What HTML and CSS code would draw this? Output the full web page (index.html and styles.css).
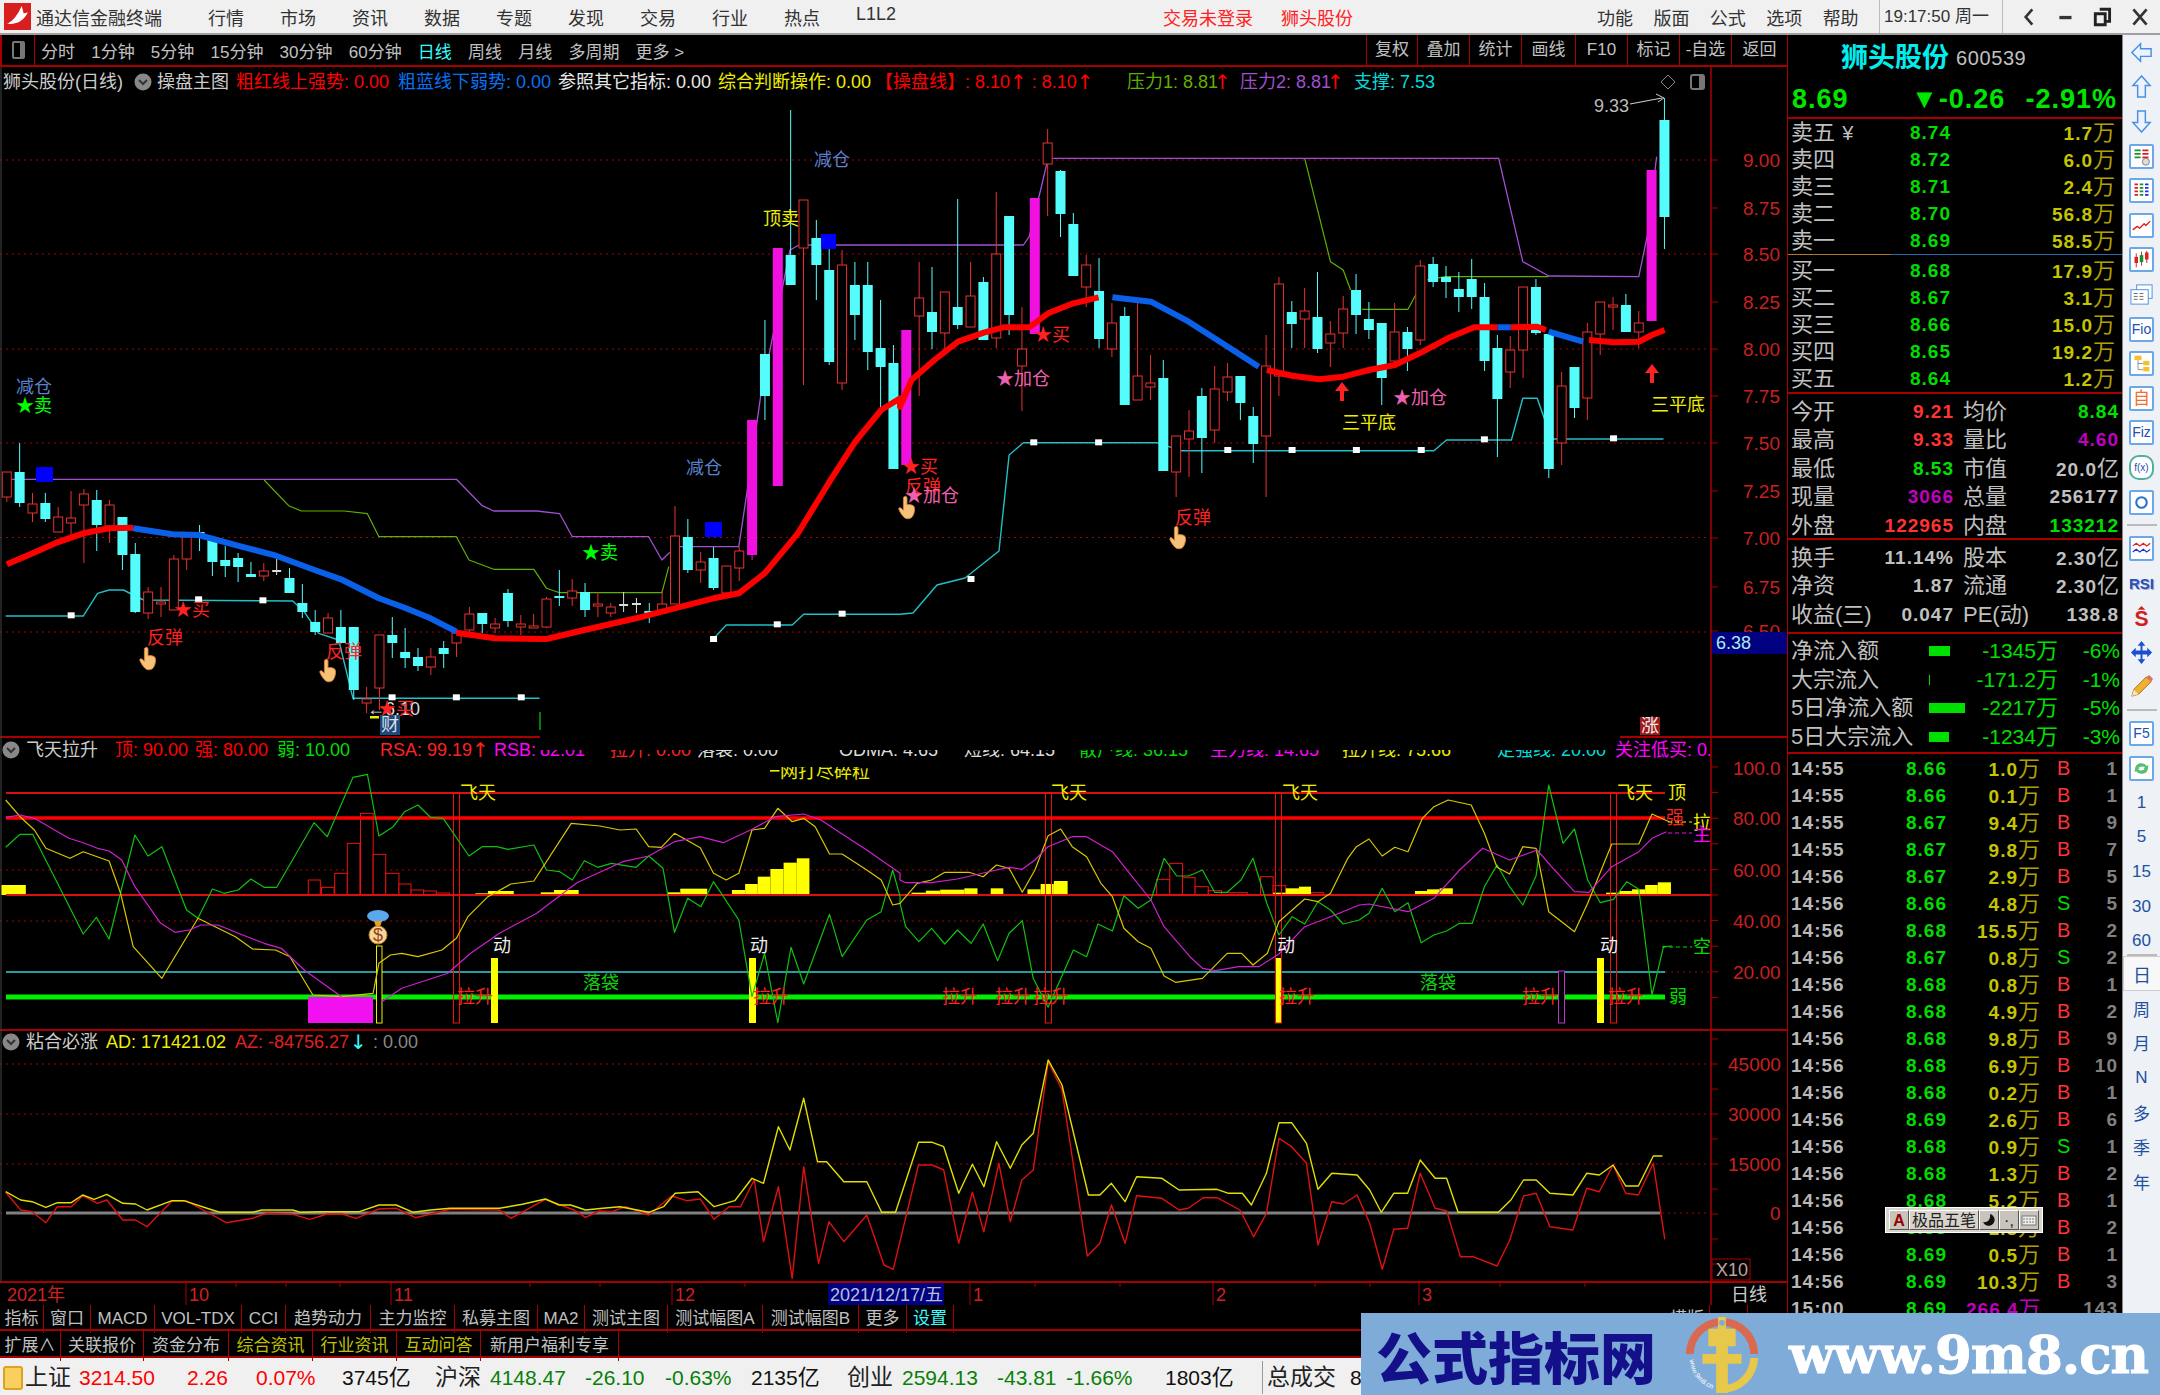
FILE: index.html
```html
<!DOCTYPE html>
<html lang="zh-CN">
<head>
  <meta charset="UTF-8">
  <title>通达信金融终端</title>
  <link rel="stylesheet" href="styles.css">
</head>
<body>
  <header class="topbar">
    <svg class="logo" viewBox="0 0 26 26"><rect width="26" height="26" fill="#d81e1e"/><path d="M3 20C9 17 13 12 17 3l2 7 4-1c-4 8-10 12-20 11z" fill="#fff"/></svg>
    <span class="app-name">通达信金融终端</span>
    <nav class="menu">
      <span>行情</span><span>市场</span><span>资讯</span><span>数据</span><span>专题</span>
      <span>发现</span><span>交易</span><span>行业</span><span>热点</span><span>L1L2</span>
    </nav>
    <span class="alert login">交易未登录</span>
    <span class="alert stock">狮头股份</span>
    <nav class="menu-right">
      <span>功能</span><span>版面</span><span>公式</span><span>选项</span><span>帮助</span>
    </nav>
    <span class="clock">19:17:50 周一</span>
    <div class="win-btns">
      <svg viewBox="0 0 20 20"><path d="M13 3 7 10l6 7" fill="none" stroke="#333" stroke-width="2.4"/></svg>
      <svg viewBox="0 0 20 20"><rect x="4" y="9" width="11" height="3" fill="#333"/></svg>
      <svg viewBox="0 0 20 20"><path d="M7 3h9v11h-3M3 7h9v10H3z" fill="none" stroke="#222" stroke-width="2.6"/></svg>
      <svg viewBox="0 0 20 20"><path d="M4 3l12 14M16 3 4 17" stroke="#333" stroke-width="2.4"/></svg>
    </div>
  </header>

  <div class="workspace">
    <section class="left-col">
      <div class="toolbar">
        <div class="tool-box"><span></span></div>
        <div class="periods">
          <span>分时</span><span>1分钟</span><span>5分钟</span><span>15分钟</span><span>30分钟</span><span>60分钟</span>
          <span class="on">日线</span><span>周线</span><span>月线</span><span>多周期</span><span>更多 &gt;</span>
        </div>
        <div class="tool-cells">
          <span>复权</span><span>叠加</span><span>统计</span><span>画线</span><span>F10</span><span>标记</span><span>-自选</span><span>返回</span>
        </div>
      </div>

      <svg id="chart" class="chart" viewBox="0 67 1787 1238" width="1787" height="1238"></svg>

      <div class="tabs tabs-one">
        <span>指标</span><span>窗口</span><span>MACD</span><span>VOL-TDX</span><span>CCI</span><span>趋势动力</span><span>主力监控</span>
        <span>私募主图</span><span>MA2</span><span>测试主图</span><span>测试幅图A</span><span>测试幅图B</span><span>更多</span><span class="on">设置</span>
        <span class="blank"></span><span>模版</span><span></span><span class="blank"></span>
      </div>
      <div class="tabs tabs-two">
        <span>扩展∧</span><span>关联报价</span><span>资金分布</span><span class="olive">综合资讯</span><span class="olive">行业资讯</span><span class="olive">互动问答</span><span>新用户福利专享</span>
      </div>
    </section>

    <aside class="quote-panel">
      <div class="stock-head"><span class="stock-name">狮头股份</span><span class="stock-code">600539</span></div>
      <div class="last-price"><span>8.69</span><span>▼-0.26</span><span>-2.91%</span></div>

      <div class="block asks">
        <div class="order"><span class="lb">卖五 <small>¥</small></span><b>8.74</b><em>1.7<i>万</i></em></div>
        <div class="order"><span class="lb">卖四</span><b>8.72</b><em>6.0<i>万</i></em></div>
        <div class="order"><span class="lb">卖三</span><b>8.71</b><em>2.4<i>万</i></em></div>
        <div class="order"><span class="lb">卖二</span><b>8.70</b><em>56.8<i>万</i></em></div>
        <div class="order"><span class="lb">卖一</span><b>8.69</b><em>58.5<i>万</i></em></div>
      </div>
      <div class="split"></div>
      <div class="block bids">
        <div class="order"><span class="lb">买一</span><b>8.68</b><em>17.9<i>万</i></em></div>
        <div class="order"><span class="lb">买二</span><b>8.67</b><em>3.1<i>万</i></em></div>
        <div class="order"><span class="lb">买三</span><b>8.66</b><em>15.0<i>万</i></em></div>
        <div class="order"><span class="lb">买四</span><b>8.65</b><em>19.2<i>万</i></em></div>
        <div class="order"><span class="lb">买五</span><b>8.64</b><em>1.2<i>万</i></em></div>
      </div>

      <div class="block stats first-stats">
        <div class="stat"><span class="lb">今开</span><b class="red">9.21</b><span class="lb">均价</span><b class="green">8.84</b></div>
        <div class="stat"><span class="lb">最高</span><b class="red">9.33</b><span class="lb">量比</span><b class="purple">4.60</b></div>
        <div class="stat"><span class="lb">最低</span><b class="green">8.53</b><span class="lb">市值</span><b>20.0<i>亿</i></b></div>
        <div class="stat"><span class="lb">现量</span><b class="purple">3066</b><span class="lb">总量</span><b>256177</b></div>
        <div class="stat"><span class="lb">外盘</span><b class="red">122965</b><span class="lb">内盘</span><b class="green">133212</b></div>
      </div>
      <div class="block stats second-stats">
        <div class="stat"><span class="lb">换手</span><b>11.14%</b><span class="lb">股本</span><b>2.30<i>亿</i></b></div>
        <div class="stat"><span class="lb">净资</span><b>1.87</b><span class="lb">流通</span><b>2.30<i>亿</i></b></div>
        <div class="stat"><span class="lb">收益(三)</span><b>0.047</b><span class="lb">PE(动)</span><b>138.8</b></div>
      </div>

      <div class="block flows">
        <div class="flow"><span class="lb">净流入额</span><span class="bar bar-a"></span><b>-1345<i>万</i></b><b>-6%</b></div>
        <div class="flow"><span class="lb">大宗流入</span><span class="bar bar-b"></span><b>-171.2<i>万</i></b><b>-1%</b></div>
        <div class="flow"><span class="lb">5日净流入额</span><span class="bar bar-c"></span><b>-2217<i>万</i></b><b>-5%</b></div>
        <div class="flow"><span class="lb">5日大宗流入</span><span class="bar bar-d"></span><b>-1234<i>万</i></b><b>-3%</b></div>
      </div>

      <div class="ticks">
        <div class="tick"><span>14:55</span><b>8.66</b><em>1.0<i>万</i></em><u>B</u><s>1</s></div>
        <div class="tick"><span>14:55</span><b>8.66</b><em>0.1<i>万</i></em><u>B</u><s>1</s></div>
        <div class="tick"><span>14:55</span><b>8.67</b><em>9.4<i>万</i></em><u>B</u><s>9</s></div>
        <div class="tick"><span>14:55</span><b>8.67</b><em>9.8<i>万</i></em><u>B</u><s>7</s></div>
        <div class="tick"><span>14:56</span><b>8.67</b><em>2.9<i>万</i></em><u>B</u><s>5</s></div>
        <div class="tick"><span>14:56</span><b>8.66</b><em>4.8<i>万</i></em><u class="sell">S</u><s>5</s></div>
        <div class="tick"><span>14:56</span><b>8.68</b><em>15.5<i>万</i></em><u>B</u><s>2</s></div>
        <div class="tick"><span>14:56</span><b>8.67</b><em>0.8<i>万</i></em><u class="sell">S</u><s>2</s></div>
        <div class="tick"><span>14:56</span><b>8.68</b><em>0.8<i>万</i></em><u>B</u><s>1</s></div>
        <div class="tick"><span>14:56</span><b>8.68</b><em>4.9<i>万</i></em><u>B</u><s>2</s></div>
        <div class="tick"><span>14:56</span><b>8.68</b><em>9.8<i>万</i></em><u>B</u><s>9</s></div>
        <div class="tick"><span>14:56</span><b>8.68</b><em>6.9<i>万</i></em><u>B</u><s>10</s></div>
        <div class="tick"><span>14:56</span><b>8.68</b><em>0.2<i>万</i></em><u>B</u><s>1</s></div>
        <div class="tick"><span>14:56</span><b>8.69</b><em>2.6<i>万</i></em><u>B</u><s>6</s></div>
        <div class="tick"><span>14:56</span><b>8.68</b><em>0.9<i>万</i></em><u class="sell">S</u><s>1</s></div>
        <div class="tick"><span>14:56</span><b>8.68</b><em>1.3<i>万</i></em><u>B</u><s>2</s></div>
        <div class="tick"><span>14:56</span><b>8.68</b><em>5.2<i>万</i></em><u>B</u><s>1</s></div>
        <div class="tick"><span>14:56</span><b>8.68</b><em>1.8<i>万</i></em><u>B</u><s>2</s></div>
        <div class="tick"><span>14:56</span><b>8.69</b><em>0.5<i>万</i></em><u>B</u><s>1</s></div>
        <div class="tick"><span>14:56</span><b>8.69</b><em>10.3<i>万</i></em><u>B</u><s>3</s></div>
        <div class="tick big"><span>15:00</span><b>8.69</b><em>266.4<i>万</i></em><u></u><s>143</s></div>
      </div>
    </aside>

    <aside class="sidebar">
      <div class="side-item"><svg viewBox="0 0 26 26"><path d="M12 4 3 13l9 9v-5h11V9H12z" fill="#eaf3ff" stroke="#4a90e0" stroke-width="1.5"/></svg></div>
      <div class="side-item"><svg viewBox="0 0 26 26"><path d="M13 2 4 12h5v12h8V12h5z" fill="#eaf3ff" stroke="#4a90e0" stroke-width="1.5"/></svg></div>
      <div class="side-item"><svg viewBox="0 0 26 26"><path d="M13 24 4 14h5V2h8v12h5z" fill="#eaf3ff" stroke="#4a90e0" stroke-width="1.5"/></svg></div>
      <div class="side-item"><svg class="ico" viewBox="0 0 24 24"><path d="M4 5h7M4 9h7M4 13h7" stroke="#1a9030" stroke-width="2"/><path d="M13 5h7M13 9h7M13 13h7" stroke="#d82020" stroke-width="2"/><circle cx="17" cy="18" r="4" fill="#ddd" stroke="#777"/></svg></div>
      <div class="side-item"><svg class="ico" viewBox="0 0 24 24"><path d="M4 5h4M4 9h4M4 13h4M4 17h4" stroke="#d82020" stroke-width="2"/><path d="M10 5h4M10 9h4M10 13h4M10 17h4" stroke="#1a9030" stroke-width="2"/><path d="M16 5h4M16 9h4M16 13h4M16 17h4" stroke="#2030d8" stroke-width="2"/></svg></div>
      <div class="side-item"><svg class="ico" viewBox="0 0 24 24"><path d="M2 17l5-4 3 2 5-5 2 2 5-5" fill="none" stroke="#e02020" stroke-width="1.6"/></svg></div>
      <div class="side-item"><svg class="ico" viewBox="0 0 24 24"><path d="M6 5v16M12 3v16M18 2v14" stroke="#c01818"/><rect x="4" y="9" width="4" height="7" fill="#e02020"/><rect x="10" y="7" width="4" height="8" fill="#169030"/><rect x="16" y="4" width="4" height="8" fill="#e02020"/></svg></div>
      <div class="side-item"><svg viewBox="0 0 26 26"><rect x="8" y="3" width="16" height="14" fill="#fff" stroke="#4a90e0"/><rect x="2" y="8" width="18" height="15" fill="#fff" stroke="#4a90e0"/><path d="M5 12h4m2 0h4M5 15h4m2 0h4M5 18h4m2 0h4" stroke="#666"/></svg></div>
      <div class="side-item"><span class="ico-txt">Fio</span></div>
      <div class="side-item"><svg class="ico" viewBox="0 0 24 24"><path d="M8 8v11h6M8 12h6" fill="none" stroke="#888"/><rect x="4" y="3" width="8" height="5" fill="#f5c030"/><rect x="14" y="9" width="7" height="5" fill="#f5c030"/><rect x="14" y="16" width="7" height="5" fill="#f5c030"/></svg></div>
      <div class="side-item"><span class="ico-txt orange">自</span></div>
      <div class="side-item"><span class="ico-txt">Fiz</span></div>
      <div class="side-item"><span class="ico-txt round">f(x)</span></div>
      <div class="side-item"><svg class="ico" viewBox="0 0 24 24"><circle cx="12" cy="12" r="6" fill="none" stroke="#2a70d0" stroke-width="2.4"/></svg></div>
      <div class="side-line"></div>
      <div class="side-item"><svg class="ico" viewBox="0 0 24 24"><path d="M2 9l4-3 4 3 4-3 4 3 4-3" fill="none" stroke="#e02020" stroke-width="1.4"/><path d="M2 16l4-3 4 3 4-3 4 3 4-3" fill="none" stroke="#2030d8" stroke-width="1.4"/></svg></div>
      <div class="side-item"><span class="rsi">RSI</span></div>
      <div class="side-item"><svg viewBox="0 0 26 26"><path d="M13 1l-4 4h8z" fill="#d02020"/><text x="13" y="22" text-anchor="middle" class="dollar">S</text></svg></div>
      <div class="side-item"><svg viewBox="0 0 26 26"><path d="M13 1l4 5h-3v5h5V8l5 5-5 5v-3h-5v5h3l-4 5-4-5h3v-5H7v3l-5-5 5-5v3h5V6H9z" fill="#1a50d0"/></svg></div>
      <div class="side-item"><svg viewBox="0 0 26 26"><path d="M3 23l2-7L18 3l5 5L10 21z" fill="#f0b030" stroke="#a07020"/><path d="M18 3l5 5 2-3-4-4z" fill="#e07070"/><path d="M3 23l2-7 5 5z" fill="#f5e0c0"/></svg></div>
      <div class="side-line"></div>
      <div class="side-item"><span class="ico-txt">F5</span></div>
      <div class="side-item"><svg class="ico" viewBox="0 0 24 24"><path d="M5 11a7 6 0 0 1 13-2l2-1-1 6-5-2 2-1a5 4 0 0 0-8 1zM19 13a7 6 0 0 1-13 2l-2 1 1-6 5 2-2 1a5 4 0 0 0 8-1z" fill="#58c070"/></svg></div>
      <div class="side-item side-num">1</div>
      <div class="side-item side-num">5</div>
      <div class="side-item side-num">15</div>
      <div class="side-item side-num">30</div>
      <div class="side-item side-num">60</div>
      <div class="side-line tight"></div>
      <div class="side-item side-num active">日</div>
      <div class="side-item side-num">周</div>
      <div class="side-item side-num">月</div>
      <div class="side-item side-num">N</div>
      <div class="side-item side-num">多</div>
      <div class="side-item side-num">季</div>
      <div class="side-item side-num">年</div>
    </aside>
  </div>

  <footer class="statusbar">
    <span class="st-icon"><i></i></span>
    <span class="st-name">上证</span><span class="up">3214.50</span><span class="up">2.26</span><span class="up">0.07%</span><span>3745<i>亿</i></span>
    <span class="st-name">沪深</span><span class="down">4148.47</span><span class="down">-26.10</span><span class="down">-0.63%</span><span>2135<i>亿</i></span>
    <span class="st-name">创业</span><span class="down">2594.13</span><span class="down">-43.81</span><span class="down">-1.66%</span><span>1803<i>亿</i></span>
    <span class="st-sep"></span><span class="st-name">总成交</span><span>8</span>
  </footer>

  <div class="ime">
    <span class="ime-btn ime-a">A</span>
    <span class="ime-btn ime-name">极品五笔</span>
    <span class="ime-btn"><svg viewBox="0 0 16 16"><path d="M9 2a6 6 0 1 1-7 8c4 1 8-2 7-8z" fill="#111"/></svg></span>
    <span class="ime-btn">·,</span>
    <span class="ime-btn"><svg viewBox="0 0 16 16"><rect x="1" y="4" width="14" height="9" fill="#eee" stroke="#777"/><path d="M2 7h12M2 10h12" stroke="#777" stroke-dasharray="2 1"/></svg></span>
  </div>

  <div class="watermark">
    <span class="wm-title">公式指标网</span>
    <svg class="wm-logo" viewBox="0 0 80 80">
      <path id="wm-arc" d="M7 46a33 33 0 0 0 30 31" fill="none"/>
      <path d="M3 40a37 37 0 0 1 74 0h-8a29 29 0 0 0-58 0z" fill="#d96a50"/>
      <path d="M77 44a37 37 0 0 1-37 36v-8a29 29 0 0 0 29-28z" fill="#e8c84a"/>
      <path d="M36 2h8v12h10v18H46v8h14v10H46v30H34V50H20V40h14v-8H26V14h10z" fill="#e8c84a"/>
      <circle cx="40" cy="8" r="3" fill="#7fabd8"/>
      <text class="wm-small"><textPath href="#wm-arc">www.9m8.cn</textPath></text>
    </svg>
    <span class="wm-url">www.9m8.cn</span>
  </div>

  <script src="chart.js"></script>
</body>
</html>
```

FILE: styles.css
```css
* {
  box-sizing: border-box;
}

body {
  margin: 0;
  width: 2160px;
  height: 1395px;
  overflow: hidden;
  position: relative;
  background: #000;
  color: #c0c0c0;
  font-family: "Liberation Sans", "Noto Sans CJK SC", sans-serif;
}

i, em, u, s {
  font-style: normal;
  text-decoration: none;
}

/* title bar */
.topbar {
  height: 35px;
  display: flex;
  align-items: center;
  background: #f0f0f0;
  border-bottom: 2px solid #a0a0a0;
  color: #333;
  font-size: 18px;
}

.logo {
  width: 27px;
  height: 27px;
  margin-left: 4px;
}

.app-name {
  width: 172px;
  margin-left: 5px;
}

.menu {
  display: flex;
  width: 720px;
}

.menu span {
  width: 72px;
}

.alert {
  color: #f22;
}

.login {
  margin-left: 235px;
  width: 118px;
}

.stock {
  width: 316px;
}

.menu-right {
  display: flex;
  width: 282px;
}

.menu-right span {
  width: 56.5px;
}

.clock {
  width: 124px;
  height: 33px;
  line-height: 33px;
  padding-left: 4px;
  border-left: 1px solid #bbb;
  border-right: 1px solid #bbb;
  font-size: 17px;
  white-space: nowrap;
}

.win-btns {
  display: flex;
  margin-left: 15px;
  gap: 15px;
}

.win-btns svg {
  width: 22px;
  height: 22px;
}

/* layout */
.workspace {
  display: flex;
  height: 1323px;
}

.left-col {
  width: 1787px;
  background: #000;
}

/* period toolbar */
.toolbar {
  height: 32px;
  display: flex;
  align-items: center;
  border-bottom: 2px solid #a80000;
  font-size: 17px;
}

.tool-box {
  width: 35px;
  height: 30px;
  border-left: 2px solid #a80000;
  border-right: 1px solid #a80000;
  display: flex;
  align-items: center;
  justify-content: center;
}

.tool-box span {
  width: 13px;
  height: 18px;
  border: 2px solid #777;
  border-right-width: 5px;
  border-radius: 2px;
}

.periods {
  display: flex;
  gap: 16.2px;
  margin-left: 6px;
  width: 1325px;
}

.periods .on {
  color: #3ff;
}

.tool-cells {
  display: grid;
  grid-template-columns: 51px 52px 52px 54px 52px 52px 52px 56px;
  height: 30px;
}

.tool-cells span {
  border-left: 1px solid #a80000;
  text-align: center;
  line-height: 30px;
  white-space: nowrap;
}

/* charts */
.chart {
  display: block;
  background: #000;
}

.chart text {
  font-family: "Liberation Sans", "Noto Sans CJK SC", sans-serif;
  font-size: 18px;
}

.chart text.axis {
  font-size: 19px;
  fill: #c82020;
}

.chart .arr {
  font-family: "DejaVu Sans", sans-serif;
  font-size: 20px;
}

/* tabs */
.tabs {
  display: grid;
  font-size: 17px;
  border-bottom: 2px solid #a80000;
}

.tabs span {
  border-right: 1px solid #a80000;
  text-align: center;
  white-space: nowrap;
}

.tabs .on {
  color: #3ff;
}

.tabs .olive {
  color: #c0c000;
}

.tabs .blank {
  border-right-color: transparent;
}

.tabs-one {
  height: 26px;
  line-height: 28px;
  grid-template-columns: 44px 47px 64px 87px 44px 85px 84px 83px 47px 83px 95px 96px 48px 47px 711px 45px 38px 1fr;
}

.tabs-two {
  height: 27px;
  line-height: 30px;
  grid-template-columns: 61px 83px 85px 84px 84px 84px 138px 1fr;
}

/* quote panel */
.quote-panel {
  width: 336px;
  border-left: 1px solid #a80000;
  border-right: 1px solid #888;
  background: #000;
  font-size: 22px;
  line-height: 27px;
}

.quote-panel b {
  font-weight: 700;
  font-size: 19px;
  letter-spacing: 1px;
}

.quote-panel i {
  font-weight: 400;
  font-size: 22px;
  letter-spacing: 0;
}

.stock-head {
  height: 47px;
  padding: 0 0 0 53px;
  display: flex;
  align-items: center;
  gap: 7px;
}

.stock-name {
  color: #0ee;
  font-size: 27px;
  font-weight: 700;
}

.stock-code {
  font-size: 20px;
  letter-spacing: 0.6px;
}

.last-price {
  height: 37px;
  display: grid;
  grid-template-columns: 119px 112px 1fr;
  padding-left: 4px;
  border-bottom: 2px solid #a80000;
  color: #00e600;
  font-size: 27px;
  font-weight: 700;
  line-height: 34px;
  letter-spacing: 1px;
  white-space: nowrap;
}

.last-price span:last-child {
  text-align: right;
  padding-right: 5px;
}

.lb {
  white-space: nowrap;
}

.lb small {
  font-size: 20px;
  margin-left: 1px;
}

.order {
  display: grid;
  grid-template-columns: 119px 60px 1fr;
  height: 27px;
  padding: 0 7px 0 3px;
}

.order b {
  color: #00dc00;
}

.order em {
  color: #c4c400;
  font-weight: 700;
  font-size: 19px;
  letter-spacing: 1px;
  text-align: right;
}

.order em i {
  color: #b0a000;
}

.split {
  height: 1px;
  background: linear-gradient(to right, #b07a20 0 103px, #2a6aa8 103px);
}

.bids {
  padding-top: 2px;
  height: 139px;
  border-bottom: 2px solid #a80000;
}

.stat {
  display: grid;
  grid-template-columns: 115px 48px 1fr auto;
  height: 28.4px;
  line-height: 28.4px;
  padding: 0 3px;
  white-space: nowrap;
}

.stat b {
  text-align: right;
  margin-left: -20px;
  padding-right: 0;
}

.stat .lb:nth-child(3) {
  padding-left: 9px;
  grid-column: 3;
}

.stat b:nth-child(2) {
  grid-column: 1 / 3;
  grid-row: 1;
  margin-left: 60px;
}

.stat .lb:first-child {
  grid-column: 1;
  grid-row: 1;
}

.stat b:last-child {
  grid-column: 4;
}

.first-stats {
  height: 146px;
  padding-top: 4px;
  border-bottom: 2px solid #a80000;
}

.second-stats {
  height: 94px;
  padding-top: 4px;
  border-bottom: 2px solid #a80000;
}

.red {
  color: #f33;
}

.green {
  color: #00e000;
}

.purple {
  color: #c000c0;
}

.flows {
  height: 120px;
  padding-top: 3px;
  border-bottom: 2px solid #a80000;
}

.flow {
  display: grid;
  grid-template-columns: 138px 40px 89px 62px;
  align-items: center;
  height: 28.6px;
  line-height: 28.6px;
  padding-left: 3px;
  white-space: nowrap;
}

.flow b {
  color: #00e000;
  font-weight: 400;
  font-size: 21px;
  letter-spacing: 0;
  text-align: right;
}

.flow i {
  color: #00e000;
}

.bar {
  height: 10px;
  background: #00e000;
}

.bar-a {
  width: 21px;
}

.bar-b {
  width: 1px;
}

.bar-c {
  width: 36px;
}

.bar-d {
  width: 20px;
}

.tick {
  display: grid;
  grid-template-columns: 115px 60px 74px 17px 20px 41px;
  height: 27px;
  padding-left: 3px;
  font-size: 19px;
  font-weight: 700;
  letter-spacing: 1px;
  white-space: nowrap;
}

.ticks {
  padding-top: 1px;
}

.tick span {
  color: #b8b8b8;
}

.tick b {
  color: #00dc00;
}

.tick em {
  grid-column: 3;
  color: #c4c400;
  text-align: right;
}

.tick em i {
  color: #b0a000;
}

.big em, .big em i {
  color: #c000c0;
}

.tick u {
  grid-column: 5;
  color: #f33;
  font-weight: 400;
  font-size: 20px;
}

.tick u.sell {
  color: #00dc00;
}

.tick s {
  text-align: right;
  color: #808080;
}

/* right icon strip */
.sidebar {
  flex: 1;
  background: #eef1f5;
  display: flex;
  flex-direction: column;
  align-items: center;
}

.side-item {
  height: 34.6px;
  width: 100%;
  display: flex;
  align-items: center;
  justify-content: center;
}

.side-item svg {
  width: 25px;
  height: 25px;
}

.side-item svg.ico {
  background: #fff;
  border: 2px solid #6aa8ea;
  border-radius: 2px;
}

.ico-txt {
  width: 25px;
  height: 25px;
  background: #fff;
  border: 2px solid #6aa8ea;
  border-radius: 2px;
  color: #2050b0;
  font-size: 14px;
  line-height: 21px;
  text-align: center;
  white-space: nowrap;
}

.ico-txt.orange {
  color: #f07030;
  font-size: 17px;
}

.ico-txt.round {
  border-radius: 10px;
  border-color: #50b0a0;
  font-size: 10px;
}

.rsi {
  color: #2a50c0;
  font-size: 15px;
  font-weight: 700;
  text-shadow: 1px 1px #aab;
}

.dollar {
  fill: #d02020;
  font-size: 22px;
  font-weight: 700;
}

.side-line {
  width: 30px;
  height: 2px;
  margin: 5px 0;
  background: #bbb;
}

.side-line.tight {
  margin: -4px 0 0;
}

.side-num {
  color: #2050a0;
  font-size: 17px;
}

.active {
  background: #f8f8f8;
  border: 1px solid #ccc;
  border-right: none;
  font-size: 18px;
}

/* bottom status bar */
.statusbar {
  height: 37px;
  padding-top: 2px;
  display: grid;
  grid-template-columns: 25px 54px 108px 69px 86px 93px 55px 95px 80px 86px 96px 55px 95px 69px 99px 97px 5px 83px 1fr;
  align-items: center;
  background: #f0f0f0;
  color: #111;
  font-size: 21px;
  line-height: 35px;
  white-space: nowrap;
}

.statusbar i {
  font-size: 22px;
}

.st-icon {
  display: flex;
  justify-content: center;
}

.st-icon i {
  width: 20px;
  height: 24px;
  background: #f8d060;
  border: 2px solid #e0a020;
  border-radius: 3px;
}

.st-name {
  font-size: 23px;
  color: #222;
}

.up {
  color: #f00;
}

.down {
  color: #087f08;
}

.st-sep {
  height: 33px;
  border-left: 1px solid #999;
}

/* floating input method bar */
.ime {
  position: absolute;
  left: 1885px;
  top: 1207px;
  width: 158px;
  height: 26px;
  padding: 2px 3px;
  display: flex;
  background: #d8d4cc;
  border: 1px solid #fff;
  font-size: 16px;
  line-height: 19px;
  color: #222;
}

.ime-btn {
  width: 20px;
  text-align: center;
  background: #c8c4bc;
  border-right: 1px solid #555;
  border-bottom: 1px solid #555;
  border-left: 1px solid #fff;
  border-top: 1px solid #fff;
  white-space: nowrap;
  overflow: hidden;
}

.ime-btn svg {
  width: 16px;
  height: 16px;
  margin-top: 1px;
}

.ime-a {
  color: #900;
  font-weight: 700;
}

.ime-name {
  width: 70px;
  background: #d8d4cc;
}

/* site watermark */
.watermark {
  position: absolute;
  left: 1361px;
  top: 1313px;
  right: 0;
  bottom: 0;
  display: flex;
  align-items: center;
  background: #7fabd8;
}

.wm-title {
  flex: none;
  width: 307px;
  margin-left: 15px;
  color: #14108a;
  font-size: 56px;
  font-weight: 900;
  white-space: nowrap;
}

.wm-logo {
  flex: none;
  width: 78px;
  height: 78px;
}

.wm-small {
  fill: #fff;
  font-size: 7px;
}

.wm-url {
  flex: none;
  margin-left: 28px;
  color: #fff;
  font-family: "DejaVu Serif", "Liberation Serif", serif;
  font-size: 53px;
  font-weight: 700;
  -webkit-text-stroke: 1px #fff;
  white-space: nowrap;
  letter-spacing: -1px;
}
```

FILE: chart.js
```js
// data traced by hand; y values are page pixels
var RED = '#e83030', CYAN = '#54fcfc', DARK = '#a80000', ARR = '<tspan class="arr">↑</tspan>';
var out = [];

// turn "x,y x,y" measured on a stretched crop into chart coordinates
function crop(x0, y0, sx) {
  return function (s) {
    return s.trim().split(/\s+/).map(function (p) {
      var a = p.split(',');
      return [x0 + a[0] / sx, y0 + a[1] / 3];
    });
  };
}
var top1 = crop(0, 340, 1.742), top2 = crop(900, 90, 1.742);
var mid1 = crop(0, 730, 1.742), mid2 = crop(900, 730, 1.742), low = crop(0, 1030, 0.871);

function line(pts, color, w) {
  out.push('<polyline fill="none" stroke-linejoin="round" points="' + pts.map(function (p) { return p[0].toFixed(1) + ',' + p[1].toFixed(1); }).join(' ') + '" stroke="' + color + '" stroke-width="' + (w || 1.2) + '"/>');
}
function seg(x1, y1, x2, y2, color, w, dash) {
  out.push('<line x1="' + x1 + '" y1="' + y1 + '" x2="' + x2 + '" y2="' + y2 + '" stroke="' + color + '" stroke-width="' + (w || 1) + '"' + (dash ? ' stroke-dasharray="' + dash + '"' : '') + '/>');
}
function rect(x, y, w, h, fill, stroke) {
  out.push('<rect x="' + x + '" y="' + y + '" width="' + w + '" height="' + h + '" fill="' + (fill || 'none') + '"' + (stroke ? ' stroke="' + stroke + '"' : '') + '/>');
}
function label(x, y, str, color, cls) {
  out.push('<text x="' + x + '" y="' + y + '" fill="' + color + '"' + (cls ? ' class="' + cls + '"' : '') + ' dominant-baseline="central">' + str + '</text>');
}
function tag(x, y, str, color) {
  out.push('<text x="' + x + '" y="' + y + '" fill="' + color + '" text-anchor="middle" dominant-baseline="central">' + str + '</text>');
}
function hand(x, y) {
  out.push('<path transform="translate(' + (x - 9) + ',' + (y - 12) + ') scale(.9)" d="M7 2c1.5-1.5 3 0 3 1.5V11c2-1 7 0 8 2 1 3 0 8-2 11-2 3-7 3-9 1C5 23 2 19 1 16c-.5-1.5 1-3 3-1l2 2V4c0-1 0-1.5 1-2z" fill="#f5c27a" stroke="#d88030"/>');
}

/* ---------- main chart ---------- */
[160, 254, 349, 443, 537.5, 632].forEach(function (y) { seg(0, y, 1711, y, DARK, 1, '2 4'); });

line(top1('460,420 503,497 525,513 600,513 640,521 660,590 795,590 817,660 860,688 930,688 952,745 975,758 1153,758 1165,680'), '#60b000');
line(top2('705,205 750,515 772,540 785,600'), '#60b000');
line(top2('805,658 885,658 900,610'), '#60b000');
line(top2('918,570 950,560 1130,560'), '#60b000');

var purple = top1('10,418 795,418 840,497 860,513 935,513 975,521 997,590 1130,590 1153,660 1165,640 1185,620 1287,620 1300,470 1325,170')
  .concat([[790, 250], [799, 245]])
  .concat(top2('0,465 215,465 225,440 245,300 258,205 1043,205 1085,515 1130,558 1287,560 1302,435 1318,200'));
line(purple, '#a050d0', 1.3);

line(top1('10,828 145,828 170,760 190,750 215,750 250,780 510,783 530,815 555,880 590,900 615,1075 940,1075'), '#20c0c8', 1.4);
line(top1('1241,900 1265,855 1380,855 1400,823 1568,823').concat([[913, 613], [937, 585], [965, 578], [999, 551]]).concat(top2('180,1260 190,1095 215,1058 447,1058 490,1082 930,1082 952,1050 1065,1050 1085,925 1110,925 1135,1047 1330,1047')), '#20c0c8', 1.4);

// type, body top, body bottom, wick high, wick low
var candles = [
  ['r',472,497,472,502],['c',472,503,443,507],['r',504,513,493,522],['c',503,519,493,522],['r',517,532,507,532],
  ['r',518,523,491,537],['r',494,505,489,563],['c',500,525,490,551],['r',505,526,500,543],['c',517,555,517,570],
  ['c',554,612,543,613],['r',592,613,587,619],['r',602,604,587,617],['r',559,610,555,610],['r',537,559,533,570],
  ['c',532,536,525,551],['c',540,562,537,576],['c',560,566,546,577],['c',558,567,553,582],['c',574,577,562,577],
  ['r',571,576,563,581],['w',571,571,555,575],['c',578,593,568,593],['c',603,612,584,618],['c',622,632,610,635],
  ['r',618,633,613,633],['c',627,643,610,643],['c',627,690,627,700],['r',699,703,687,713],['r',635,688,635,710],
  ['c',635,643,617,658],['c',652,658,628,668],['c',657,666,648,671],['r',657,667,648,675],['c',648,654,641,668],
  ['r',633,643,630,657],['r',614,630,607,633],['c',613,624,613,633],['r',624,628,618,633],['c',593,621,589,627],
  ['r',624,627,615,635],['r',626,628,614,628],['r',599,627,597,628],['c',596,598,570,606],['r',591,598,579,606],
  ['c',592,610,583,617],['r',604,606,592,617],['r',607,613,603,617],['w',605,605,592,612],['w',604,604,598,613],
  ['c',611,613,603,623],['r',604,613,590,613],['r',536,604,506,604],['c',537,570,519,573],['r',562,570,552,583],
  ['c',558,588,547,590],['r',566,593,566,593],['r',551,568,547,581],['m',420,555,420,560],['c',354,396,320,420],
  ['m',248,486,248,486],['c',255,285,110,285],['r',200,248,200,385],['c',238,265,220,300],['c',270,362,235,365],
  ['r',265,383,250,390],['c',285,315,262,340],['c',285,352,262,370],['c',348,367,300,410],['c',363,469,345,469],
  ['m',330,465,330,465],['r',298,316,262,396],['c',312,332,267,349],['r',292,333,292,349],['c',307,325,199,329],
  ['r',296,327,262,327],['c',282,340,277,340],['r',254,338,192,348],['c',216,315,216,335],['r',349,366,307,411],
  ['m',198,334,198,334],['r',143,164,129,216],['c',171,214,170,237],['c',224,276,213,276],['r',265,287,255,307],
  ['c',291,339,258,348],['r',323,349,303,357],['c',316,405,307,405],['r',376,400,298,400],['r',383,387,355,400],
  ['c',378,471,360,471],['r',436,472,436,497],['r',431,439,410,477],['c',396,438,388,473],['r',389,430,366,443],
  ['r',377,392,363,401],['c',376,403,376,420],['c',416,444,407,463],['r',366,436,335,497],['r',284,376,277,396],
  ['c',312,324,301,348],['r',311,319,288,348],['c',317,349,272,353],['r',334,343,321,367],['r',309,333,296,348],
  ['c',290,315,274,334],['c',319,330,302,339],['c',323,378,323,405],['r',332,361,303,367],['c',332,349,327,371],
  ['r',266,340,260,345],['c',264,282,257,287],['c',277,282,266,298],['c',289,297,272,312],['c',279,297,259,309],
  ['c',297,361,283,371],['c',348,399,335,457],['r',350,372,336,388],['r',287,350,287,378],['c',287,333,279,335],
  ['c',334,469,334,478],['r',386,443,372,465],['c',367,408,367,418],['r',332,398,323,420],['r',302,334,302,355],
  ['r',305,307,297,330],['c',305,332,294,332],['r',323,332,311,348],['m',170,321,170,321],['c',120,217,98,249]
];
candles.forEach(function (c, i) {
  var x = 6.8 + 12.85 * i;
  var color = c[0] === 'r' ? RED : c[0] === 'c' ? CYAN : c[0] === 'w' ? '#ddd' : '#f010e0';
  if (c[3] < c[1]) seg(x, c[3], x, c[1], color);
  if (c[4] > c[2]) seg(x, c[2], x, c[4], color);
  if (c[0] === 'r') rect(x - 4.5, c[1], 9, c[2] - c[1], '#000', color);
  else if (c[0] === 'w') seg(x - 4.5, c[1], x + 4.5, c[1], color, 2);
  else rect(x - 5, c[1], 10, c[2] - c[1], color);
});

// thick moving average, red going up, blue going down
var MA = 6;
line(top1('12,673 57,640 100,607 145,580 190,565 232,563'), '#f00', MA);
line(top1('232,565 300,583 346,585 414,617 481,647 548,690 594,718 660,775 705,803 750,835 795,875'), '#0a60e8', MA);
line(top1('795,878 862,895 952,897 1018,870 1108,835 1175,805 1243,775 1287,760 1332,700 1390,580 1445,425 1490,305 1535,210 1568,175').concat(top2('0,950 20,870 60,810 101,755 146,728 180,712 225,712 258,670 302,640 346,622')), '#f00', MA);
line(top2('370,622 437,635 503,695 571,770 625,830'), '#0a60e8', MA);
line(top2('639,840 683,857 730,868 772,860 817,840 862,825 905,790 960,740 1000,712 1041,712'), '#f00', MA);
line(top2('1041,712 1064,712'), '#0a60e8', MA);
line(top2('1064,712 1110,710 1125,720'), '#f00', MA);
line(top2('1130,725 1190,755'), '#0a60e8', MA);
line(top2('1200,750 1243,757 1287,755 1310,735 1332,720'), '#f00', MA);

top1('124,826 346,778 458,781 683,1072 795,1072 908,1072 1243,897 1354,853 1467,821').concat(top2('233,1057 346,1057 571,1080 683,1080 795,1080 908,1080 1018,1048 1243,1045')).concat([[971, 579]]).forEach(function (p) {
  rect(p[0] - 3.5, p[1] - 3, 7, 6, '#fff');
});

rect(36, 467, 17, 15, '#00f');
rect(705, 522, 17, 15, '#00f');
rect(821, 234, 15, 15, '#00f');

var GREY_BLUE = '#5c80d0', PINK = '#f060b0';
tag(34, 387, '减仓', GREY_BLUE); tag(704, 468, '减仓', GREY_BLUE); tag(832, 160, '减仓', GREY_BLUE);
tag(34, 406, '★卖', '#0f0'); tag(600, 553, '★卖', '#0f0');
tag(781, 219, '顶卖', '#ee0');
tag(192, 610, '★买', '#f22'); tag(920, 467, '★买', '#f22'); tag(1052, 335, '★买', '#f22');
tag(165, 638, '反弹', '#f22'); tag(344, 652, '反弹', '#f22'); tag(923, 487, '反弹', '#f22'); tag(1193, 518, '反弹', '#f22');
tag(932, 496, '★加仓', PINK); tag(1023, 379, '★加仓', PINK); tag(1420, 398, '★加仓', PINK);
hand(148, 658); hand(328, 670); hand(907, 507); hand(1178, 537);
tag(1369, 423, '三平底', '#ee0'); tag(1678, 405, '三平底', '#ee0');
[[1342, 382], [1652, 364]].forEach(function (p) {
  out.push('<path d="M' + p[0] + ' ' + p[1] + 'l-7 9h5v10h4v-10h5z" fill="#f22"/>');
});
label(1594, 106, '9.33', '#bbb');
line([[1630, 104], [1662, 98]], '#ccc');
out.push('<path d="M1656 94l8 4-6 4" fill="none" stroke="#ccc"/>');
label(367, 709, '←6.10', '#ddd');
tag(396, 709, '★买', '#f22');
rect(370, 716, 9, 2.5, '#ee0');

// price axis
[['9.00', 160], ['8.75', 208], ['8.50', 254], ['8.25', 302], ['8.00', 349], ['7.75', 396], ['7.50', 443], ['7.25', 491], ['7.00', 538], ['6.75', 587], ['6.50', 631]].forEach(function (a) {
  label(1743, a[1], a[0], '#c82020', 'axis');
  seg(1711, a[1], 1718, a[1], DARK);
});

/* ---------- flying panel ---------- */
seg(6, 793, 1665, 793, '#d81010', 2);
seg(0, 870, 1711, 870, DARK, 1, '2 4');
seg(0, 921, 1711, 921, DARK, 1, '2 4');
seg(1665, 972, 1711, 972, DARK, 1, '2 4');

// hollow red and filled yellow step bars
var base = 895;
function bars(map, list, fill) {
  list.forEach(function (b) {
    var a = map(b[0] + ',' + b[2])[0], z = map(b[1] + ',0')[0];
    if (fill) rect(a[0], a[1], z[0] - a[0], base - a[1], fill);
    else rect(a[0], a[1], z[0] - a[0], base - a[1], '#000', '#f01010');
  });
}
bars(mid1, [[537,558,450],[560,582,472],[583,605,430],[605,627,340],[628,650,250],[650,672,373],[672,695,430],[695,716,462],[716,738,480],[738,760,483],[760,783,489]]);
bars(mid2, [[447,470,448],[470,492,400],[492,514,443],[514,537,470],[537,560,482],[560,605,488],[628,650,440],[650,672,467],[716,738,488]]);
bars(mid1, [[2,45,465],[828,850,490],[850,895,483],[942,965,487],[965,1008,480],[1162,1185,487],[1185,1232,476],[1275,1298,480],[1298,1320,462],[1320,1342,440],[1342,1365,417],[1365,1388,398],[1388,1410,385]], '#ff0');
bars(mid2, [[20,45,488],[45,70,482],[70,112,479],[112,135,475],[158,180,475],[222,245,478],[245,268,462],[268,292,453],[650,672,488],[672,695,475],[695,716,470],[897,918,483],[918,940,478],[940,963,475],[1230,1253,488],[1253,1275,483],[1275,1298,478],[1298,1320,465],[1320,1343,457]], '#ff0');

seg(6, 818, 1665, 818, '#f00', 3.5);
seg(6, 895, 1711, 895, '#d81010', 2);
seg(6, 972, 1665, 972, '#30d0d8', 1.5);
seg(6, 997, 1665, 997, '#00f000', 5);

rect(308, 997, 65, 26, '#f010f0');
rect(376.5, 946, 5.5, 77, '#000', '#ee0');
rect(491, 958, 7, 65, '#ff0');
rect(749, 958, 7, 65, '#ff0');
rect(1275, 958, 7, 65, '#ff0');
rect(1597, 958, 7, 65, '#ff0');
[453, 1045, 1275, 1610].forEach(function (x) { rect(x + .5, 793, 6, 230, 'none', '#f01010'); });
rect(1558.5, 971, 6, 52, '#000', '#c030d0');

line(mid1('10,352 35,313 57,313 145,612 168,562 190,627 235,315 258,378 282,350 325,540 345,565 370,477 390,490 415,480 437,447 460,472 482,472 547,278 570,320 615,142 640,133 660,318 685,290 705,245 728,225 750,262 772,265 817,378 840,350 865,350 885,358 930,345 952,420 975,425 997,450 1018,392 1041,412 1065,400 1108,412 1130,378 1155,415 1175,607 1198,505 1221,530 1243,455 1287,570 1310,800 1332,670 1355,878 1378,652 1400,762 1445,553 1467,680 1510,570 1535,545 1555,420 1568,500').concat(mid2('0,520 10,590 33,635 55,595 78,642 100,600 124,640 145,582 170,692 190,610 213,572 232,745 258,832 302,660 325,680 345,582 370,603 390,497 415,535 437,510 460,385 482,438 503,438 527,420 548,487 570,487 594,450 615,385 639,520 660,615 683,560 705,582 728,515 750,540 772,582 800,570 817,550 840,475 862,545 885,518 908,638 930,615 952,603 975,580 997,580 1018,470 1040,405 1062,470 1085,525 1108,437 1130,165 1155,340 1175,297 1198,450 1220,518 1243,508 1266,455 1287,478 1310,795 1330,650 1345,648')), '#10c010');
line(mid1('10,210 35,260 60,300 80,355 122,385 145,365 190,393 210,490 232,650 282,745 345,565 410,620 440,657 480,660 505,680 545,795 595,800')
  .concat(mid1('650,790 660,700 680,675 700,670 728,680 770,660 795,625 815,560 850,500 890,462 930,453 995,280 1045,288 1080,300 1108,297 1130,350 1152,352 1175,310 1220,353 1243,430 1265,450 1287,430 1310,300 1332,295 1355,235 1380,275 1400,265 1420,290 1445,372 1467,372 1510,420 1535,450 1555,525 1568,520'))
  .concat(mid2('0,520 30,460 55,450 78,427 120,427 145,440 168,405 190,415 213,487 235,420 258,317 280,297 300,350 325,380 350,460 370,500 390,595 415,635 437,655 460,738 480,757 527,745 570,670 595,670 615,705 640,670 660,575 705,507 728,515 750,490 780,385 795,350 817,327 840,378 862,352 885,365 910,265 930,230 955,210 995,225 1018,310 1040,412 1062,432 1085,350 1108,355 1130,545 1175,605 1198,520 1240,342 1287,342 1310,252 1340,275')), '#d8c800');
line(mid1('10,262 35,255 60,265 120,325 145,338 170,355 190,363 212,390 235,470 280,580 305,607 330,600 350,585 380,585 415,610 460,640 490,655 530,720 595,800'), '#d020d0');
line(mid1('665,815 700,775 780,730 820,670 870,610 935,550 1005,458 1085,395 1130,378 1175,335 1220,320 1260,338 1310,298 1350,260 1400,252 1430,270 1467,312 1510,360 1568,430').concat(mid2('0,450 10,458 55,458 100,447 168,420 190,412 213,418 235,390 258,350 300,320 325,320 370,365 400,430 437,510 460,590 505,680 527,715 550,722 590,710 625,710 660,672 705,590 750,560 800,525 817,522 885,545 930,505 975,420 1015,355 1062,390 1110,360 1135,410 1175,485 1200,487 1240,410 1287,365 1310,325 1335,305')), '#d020d0');

[478, 1069, 1300, 1635].forEach(function (x) { tag(x, 793, '飞天', '#ee0'); });
[502, 759, 1286, 1609].forEach(function (x) { tag(x, 946, '动', '#eee'); });
[475, 771, 960, 1013, 1051, 1297, 1540, 1626].forEach(function (x) { tag(x, 997, '拉升', '#f22'); });
tag(601, 983, '落袋', '#10d010'); tag(1438, 983, '落袋', '#10d010');
tag(1677, 793, '顶', '#ee0'); tag(1675, 818, '强', '#f22'); tag(1702, 823, '拉', '#ee0');
tag(1702, 835, '主', '#f0f'); tag(1702, 947, '空', '#0d0'); tag(1678, 997, '弱', '#0d0');
seg(1668, 822, 1692, 822, '#ee0', 1, '4 3'); seg(1668, 833, 1692, 833, '#f0f', 1, '4 3'); seg(1662, 947, 1692, 947, '#0d0', 1, '4 3');

// money bag signal
out.push('<ellipse cx="378" cy="916" rx="11" ry="6" fill="#5aa8f0"/><path d="M374 921h8l-2 6h-4z" fill="#e8a020"/><ellipse cx="378" cy="935" rx="9" ry="9" fill="#f0d8a0" stroke="#c88020"/>');
tag(378, 935, '$', '#a04010');

[['100.0', 768], ['80.00', 818], ['60.00', 870], ['40.00', 921], ['20.00', 972]].forEach(function (a) { label(1733, a[1], a[0], '#c82020', 'axis'); });
for (var v = 0; v <= 9; v++) seg(1711, 767 + v * 25.6, 1718, 767 + v * 25.6, DARK);

/* ---------- lower panel ---------- */
[1064, 1114, 1164, 1213].forEach(function (y) { seg(0, y, 1711, y, DARK, 1, '2 4'); });
seg(6, 1213, 1660, 1213, '#808080', 3);
line(low('5,487 18,540 28,545 40,578 50,530 62,530 72,497 85,520 93,510 107,570 118,570 128,590 150,512 162,512 185,555 197,578 220,565 232,550 255,553 270,568 285,552 298,552 310,565 330,537 345,535 362,563 378,550 392,538 435,540 445,565 475,508 500,540 510,562 522,543 533,545 545,530 565,555 585,498 598,512 610,507 622,568 635,530 645,530 657,450 665,635 678,470 690,745 700,410 713,700 722,575 735,635 755,555 770,705 778,718 800,405 812,405 822,420 835,640 847,487 857,605 870,400 880,575 890,450 900,420 913,95 925,180 947,678 958,640 968,525 980,640 990,497 1012,505 1027,540 1035,535 1048,503 1060,503 1080,540 1092,620 1103,550 1114,325 1125,350 1138,400 1148,645 1160,515 1170,522 1182,495 1193,580 1204,718 1214,598 1226,595 1237,430 1250,535 1260,542 1272,680 1283,680 1304,708 1315,630 1327,498 1338,490 1350,590 1370,600 1382,475 1393,485 1405,405 1416,490 1427,495 1440,400 1450,628'), '#e01010', 1.4);
line(low('5,485 18,510 28,515 40,532 50,518 62,518 72,495 82,508 93,493 107,520 118,522 128,540 150,512 160,512 185,540 192,547 220,547 228,540 255,540 262,547 280,545 313,545 330,525 345,525 360,547 375,540 392,535 435,535 455,523 475,507 487,525 497,525 510,540 525,535 540,530 565,547 578,530 588,490 608,485 622,530 640,512 655,445 665,460 678,290 688,360 700,205 712,395 720,395 735,455 755,455 768,547 780,547 800,337 812,337 822,350 835,490 847,403 857,470 868,335 880,415 890,345 900,310 913,90 925,165 948,495 958,495 968,460 980,515 990,440 1012,445 1027,480 1060,478 1070,490 1082,490 1090,525 1103,430 1114,278 1125,278 1138,340 1148,478 1160,430 1182,435 1193,480 1203,547 1214,490 1226,490 1237,390 1250,445 1260,445 1270,547 1305,547 1316,510 1327,450 1338,450 1350,490 1370,495 1382,430 1393,435 1405,405 1416,468 1427,468 1440,378 1448,378'), '#e0e000', 1.4);
[['45000', 1064], ['30000', 1114], ['15000', 1164]].forEach(function (a) { label(1728, a[1], a[0], '#c82020', 'axis'); });
label(1770, 1213, '0', '#c82020', 'axis');
for (v = 0; v <= 9; v++) seg(1711, 1039 + v * 25, 1718, 1039 + v * 25, DARK);
rect(1712, 1259, 38, 21, 'none', DARK);
label(1716, 1270, 'X10', '#c0a0a0');

/* ---------- black overlay left behind by the terminal ---------- */
[[610, '拉升: 0.00', '#f22'], [697, '落袋: 0.00', '#ddd'], [839, 'ODMA: 4.65', '#ddd'], [964, '短线: 64.15', '#ddd'], [1079, '散户线: 36.15', '#0d0'], [1210, '主力线: 14.65', '#f0f'], [1342, '拉升线: 75.66', '#ee0'], [1497, '定强线: 20.00', '#0dd']].forEach(function (t) {
  label(t[0], 750, t[1], t[2]);
});
label(540, 750, '82.01', '#f0f');
rect(540, 700, 1080, 50, '#000');
out.push('<clipPath id="cut"><rect x="770" y="767" width="100" height="14"/></clipPath><text x="816" y="772" fill="#ee0" text-anchor="middle" dominant-baseline="central" clip-path="url(#cut)">一网打尽碎粒</text>');
seg(540, 712, 540, 730, '#0a0', 1.5);

/* ---------- indicator titles ---------- */
function circle(x, y) {
  out.push('<circle cx="' + x + '" cy="' + y + '" r="8.5" fill="#888"/><path d="M' + (x - 4) + ' ' + (y - 2) + 'l4 4 4-4" fill="none" stroke="#333" stroke-width="2"/>');
}
label(3, 82, '狮头股份(日线)', '#ccc');
circle(143, 82);
label(157, 82, '操盘主图', '#ccc');
label(236, 82, '粗红线上强势: 0.00', '#f00');
label(398, 82, '粗蓝线下弱势: 0.00', '#0a70f0');
label(558, 82, '参照其它指标: 0.00', '#e8e8e8');
label(718, 82, '综合判断操作: 0.00', '#ee0');
label(875, 82, '【操盘线】: 8.10' + ARR + ' : 8.10' + ARR, '#f00');
label(1127, 82, '压力1: 8.81', '#60b000');
label(1214, 82, ARR, '#f00');
label(1240, 82, '压力2: 8.81', '#a050d0');
label(1327, 82, ARR, '#f00');
label(1354, 82, '支撑: 7.53', '#0dd');
out.push('<path d="M1668 75l7 7-7 7-7-7z" fill="none" stroke="#888"/><rect x="1691" y="75" width="13" height="14" rx="2" fill="none" stroke="#777" stroke-width="2"/><rect x="1699" y="76" width="4" height="12" fill="#777"/>');

circle(11, 750);
label(26, 750, '飞天拉升', '#ccc');
label(115, 750, '顶: 90.00', '#f00');
label(195, 750, '强: 80.00', '#f00');
label(277, 750, '弱: 10.00', '#0d0');
label(380, 750, 'RSA: 99.19' + ARR, '#f22');
label(494, 750, 'RSB:', '#f0f');
label(1615, 750, '关注低买: 0.', '#f0f');

circle(11, 1042);
label(26, 1042, '粘合必涨', '#ccc');
label(106, 1042, 'AD: 171421.02', '#ee0');
label(235, 1042, 'AZ: -84756.27', '#e02020');
label(350, 1042, '<tspan class="arr">↓</tspan>', '#3ff');
label(373, 1042, ': 0.00', '#888');

rect(380, 715, 20, 20, '#1a4a80');
tag(390, 725, '财', '#ddd');
rect(1640, 717, 20, 18, '#a01818');
tag(1650, 726, '涨', '#eee');

rect(1712, 632, 75, 22, '#000080');
label(1716, 643, '6.38', '#aee');

/* ---------- panel frames ---------- */
seg(1711, 67, 1711, 1305, DARK, 1.5);
seg(0, 737, 540, 737, DARK, 2);
seg(1620, 737, 1787, 737, DARK, 2);
seg(0, 1030, 1787, 1030, DARK, 2);
seg(0, 1282, 1787, 1282, DARK, 2);
seg(1, 67, 1, 1282, '#444', 1);

/* ---------- time axis ---------- */
[186, 391, 672, 970, 1213, 1419].forEach(function (x) { seg(x, 1282, x, 1305, DARK); });
label(7, 1295, '2021年', '#d02020');
label(189, 1295, '10', '#d02020');
label(394, 1295, '11', '#d02020');
label(675, 1295, '12', '#d02020');
label(973, 1295, '1', '#d02020');
label(1216, 1295, '2', '#d02020');
label(1422, 1295, '3', '#d02020');
rect(828, 1283, 116, 22, '#000080');
label(830, 1295, '2021/12/17/五', '#b8c0d8');
[236, 286, 340, 530, 600, 745, 1035, 1120, 1315, 1370, 1500, 1585].forEach(function (x) { seg(x, 1283, x, 1287, DARK); });
label(1731, 1295, '日线', '#ccc');

document.getElementById('chart').innerHTML = out.join('');
```
